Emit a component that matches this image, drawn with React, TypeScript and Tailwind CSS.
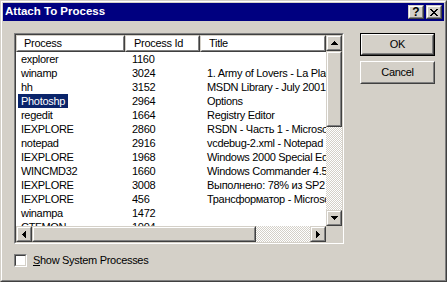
import React from 'react';

const rows: [string, string, string][] = [
  ['explorer', '1160', ''],
  ['winamp', '3024', '1. Army of Lovers - La Plage - Winamp'],
  ['hh', '3152', 'MSDN Library - July 2001'],
  ['Photoshp', '2964', 'Options'],
  ['regedit', '1664', 'Registry Editor'],
  ['IEXPLORE', '2860', 'RSDN - Часть 1 - Microsoft Internet Explorer'],
  ['notepad', '2916', 'vcdebug-2.xml - Notepad'],
  ['IEXPLORE', '1968', 'Windows 2000 Special Edition'],
  ['WINCMD32', '1660', 'Windows Commander 4.51'],
  ['IEXPLORE', '3008', 'Выполнено: 78% из SP2'],
  ['IEXPLORE', '456', 'Трансформатор - Microsoft Internet Explorer'],
  ['winampa', '1472', ''],
  ['CTFMON', '1004', ''],
];

// classic 3d edge used by scrollbar parts
const Raised: React.FC<{ className?: string; children?: React.ReactNode }> = ({ className = '', children }) => (
  <div className={`border border-[#d4d0c8] border-b-[#404040] border-r-[#404040] ${className}`}>
    <div className="w-full h-full border border-white border-b-[#808080] border-r-[#808080] bg-[#d4d0c8] flex items-center justify-center">
      {children}
    </div>
  </div>
);

const Arrow: React.FC<{ dir: 'up' | 'down' | 'left' | 'right' }> = ({ dir }) => {
  const paths = {
    up: 'M3 0h1v1h1v1h1v1h1v1H0V3h1V2h1V1h1z',
    down: 'M0 0H7V1H6V2H5V3H4V4H3V3H2V2H1V1H0z',
    left: 'M4 0v7H3V6H2V5H1V4H0V3h1V2h1V1h1V0z',
    right: 'M0 0h1v1h1v1h1v1h1v1H3v1H2v1H1v1H0z',
  };
  const vertical = dir === 'up' || dir === 'down';
  return (
    <svg width={vertical ? 7 : 4} height={vertical ? 4 : 7} viewBox={vertical ? '0 0 7 4' : '0 0 4 7'} shapeRendering="crispEdges">
      <path d={paths[dir]} fill="#000" />
    </svg>
  );
};

const Dither: React.FC<{ className?: string }> = ({ className = '' }) => (
  <div className={`bg-[repeating-conic-gradient(#ffffff_0_25%,#d4d0c8_0_50%)] bg-[length:2px_2px] ${className}`} />
);

const HeaderCell: React.FC<{ className?: string; children: React.ReactNode }> = ({ className = '', children }) => (
  <div className={`h-full border border-[#d4d0c8] border-b-[#404040] border-r-[#404040] shrink-0 ${className}`}>
    <div className="h-full border border-white border-b-[#808080] border-r-[#808080] flex items-center pl-[5px] whitespace-nowrap overflow-hidden">
      {children}
    </div>
  </div>
);

const PushButton: React.FC<{ isDefault?: boolean; children: React.ReactNode }> = ({ isDefault, children }) =>
  isDefault ? (
    <div className="w-[75px] h-[23px] border border-black">
      <div className="h-full border border-white border-b-[#404040] border-r-[#404040]">
        <div className="h-full border border-[#d4d0c8] border-b-[#808080] border-r-[#808080] flex items-center justify-center">
          {children}
        </div>
      </div>
    </div>
  ) : (
    <div className="w-[75px] h-[23px] border border-white border-b-[#404040] border-r-[#404040]">
      <div className="h-full border border-[#d4d0c8] border-b-[#808080] border-r-[#808080] flex items-center justify-center">
        {children}
      </div>
    </div>
  );

export default function App() {
  return (
    <div className="w-[447px] h-[282px] border border-[#d4d0c8] border-b-[#404040] border-r-[#404040] font-['Liberation_Sans',Arial,sans-serif] text-[11px] tracking-[-0.3px] text-black select-none">
      <div className="h-full border border-white border-b-[#808080] border-r-[#808080] bg-[#d4d0c8] p-px flex flex-col">
        {/* Caption */}
        <div className="h-[18px] bg-[#000080] flex items-center pl-[2px] pr-[2px]">
          <span className="text-white font-bold text-[11.5px] tracking-normal">Attach To Process</span>
          <div className="ml-auto flex gap-[2px]">
            <Raised className="w-[16px] h-[14px]">
              <span className="font-bold text-[12px] leading-none tracking-normal">?</span>
            </Raised>
            <Raised className="w-[16px] h-[14px]">
              <svg width="8" height="7" viewBox="0 0 8 7" shapeRendering="crispEdges">
                <path d="M0 0h2v1h1v1h2V1h1V0h2v1H7v1H6v1H5v1h1v1h1v1h1v1H6V6H5V5H3v1H2v1H0V6h1V5h1V4h1V3H2V2H1V1H0z" fill="#000" />
              </svg>
            </Raised>
          </div>
        </div>

        {/* Body */}
        <div className="flex pl-[11px] pt-[12px]">
          <div className="flex flex-col">
            {/* List view */}
            <div className="w-[330px] h-[211px] border border-[#808080] border-b-white border-r-white">
              <div className="h-full border border-[#404040] border-b-[#d4d0c8] border-r-[#d4d0c8] bg-white flex">
                <div className="w-[310px] flex flex-col">
                  <div className="h-[17px] flex overflow-hidden">
                    <HeaderCell className="w-[109px]"><span className="pl-px">Process</span></HeaderCell>
                    <HeaderCell className="w-[75px]"><span className="pl-[2px]">Process Id</span></HeaderCell>
                    <HeaderCell className="w-[126px]"><span className="pl-[2px]">Title</span></HeaderCell>
                  </div>
                  <div className="h-[174px] overflow-hidden">
                    {rows.map(([name, pid, title], i) => (
                      <div key={i} className="h-[14px] flex items-center whitespace-nowrap">
                        <div className="w-[109px] shrink-0 pl-[2px]">
                          <span className={i === 3 ? 'bg-[#0a246a] text-white px-[3px] py-px' : 'px-[3px]'}>{name}</span>
                        </div>
                        <div className="w-[75px] shrink-0 pl-[7px]">{pid}</div>
                        <div className="shrink-0 pl-[7px]">{title}</div>
                      </div>
                    ))}
                  </div>
                  {/* horizontal scrollbar */}
                  <div className="h-[16px] flex">
                    <Raised className="w-[16px] h-[16px]"><Arrow dir="left" /></Raised>
                    <Raised className="w-[224px] h-[16px]" />
                    <Dither className="w-[54px] h-[16px]" />
                    <Raised className="w-[16px] h-[16px]"><Arrow dir="right" /></Raised>
                  </div>
                </div>
                {/* vertical scrollbar */}
                <div className="w-[16px] flex flex-col">
                  <Raised className="w-[16px] h-[16px]"><Arrow dir="up" /></Raised>
                  <Raised className="w-[16px] h-[76px]" />
                  <Dither className="w-[16px] h-[83px]" />
                  <Raised className="w-[16px] h-[16px]"><Arrow dir="down" /></Raised>
                  <div className="w-[16px] h-[16px] bg-[#d4d0c8]" />
                </div>
              </div>
            </div>

            {/* Checkbox */}
            <div className="mt-[8px] flex items-center">
              <div className="w-[13px] h-[13px] border border-[#808080] border-b-white border-r-white">
                <div className="h-full border border-[#404040] border-b-[#d4d0c8] border-r-[#d4d0c8] bg-white" />
              </div>
              <span className="ml-[6px]"><span className="underline">S</span>how System Processes</span>
            </div>
          </div>

          <div className="ml-[16px] flex flex-col gap-[5px]">
            <PushButton isDefault>OK</PushButton>
            <PushButton>Cancel</PushButton>
          </div>
        </div>
      </div>
    </div>
  );
}
